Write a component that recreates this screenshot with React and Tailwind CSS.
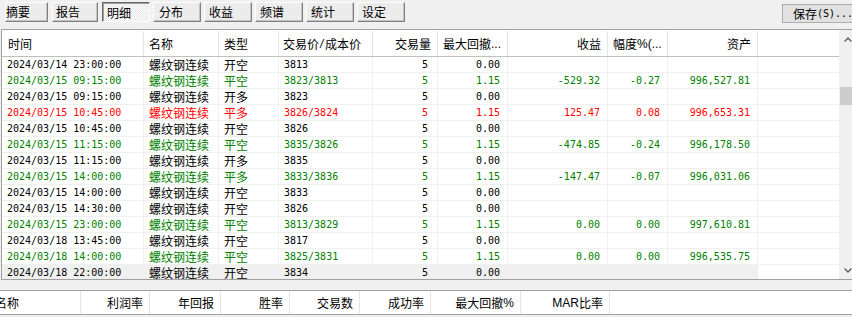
import React from "react";

const CJK = "font-['Noto_Sans_CJK_SC',sans-serif] text-[12px]";
const MONO = "font-['DejaVu_Sans_Mono',monospace] text-[10px]";
const SANS = "font-['Liberation_Sans',sans-serif] text-[12px]";

const buttons = [
  { t: "摘要", cls: "ml-[5px] w-[43px] pl-[0px]" },
  { t: "报告", cls: "ml-[4px] w-[46px] pl-[3px]" },
  { t: "明细", cls: "ml-[4px] w-[48px] pl-[4px]", pressed: true },
  { t: "分布", cls: "ml-[3px] w-[48px] pl-[5px]" },
  { t: "收益", cls: "ml-[3px] w-[48px] pl-[4px]" },
  { t: "频谱", cls: "ml-[3px] w-[48px] pl-[4px]" },
  { t: "统计", cls: "ml-[3px] w-[48px] pl-[4px]" },
  { t: "设定", cls: "ml-[3px] w-[48px] pl-[4px]" },
];

const G = "text-[#008000]";
const R = "text-[#ff0000]";
const K = "text-black";

const rows = [
  ["2024/03/14 23:00:00", "开空", "3813", "0.00", "", "", "", K],
  ["2024/03/15 09:15:00", "平空", "3823/3813", "1.15", "-529.32", "-0.27", "996,527.81", G],
  ["2024/03/15 09:15:00", "开多", "3823", "0.00", "", "", "", K],
  ["2024/03/15 10:45:00", "平多", "3826/3824", "1.15", "125.47", "0.08", "996,653.31", R],
  ["2024/03/15 10:45:00", "开空", "3826", "0.00", "", "", "", K],
  ["2024/03/15 11:15:00", "平空", "3835/3826", "1.15", "-474.85", "-0.24", "996,178.50", G],
  ["2024/03/15 11:15:00", "开多", "3835", "0.00", "", "", "", K],
  ["2024/03/15 14:00:00", "平多", "3833/3836", "1.15", "-147.47", "-0.07", "996,031.06", G],
  ["2024/03/15 14:00:00", "开空", "3833", "0.00", "", "", "", K],
  ["2024/03/15 14:30:00", "开空", "3826", "0.00", "", "", "", K],
  ["2024/03/15 23:00:00", "平空", "3813/3829", "1.15", "0.00", "0.00", "997,610.81", G],
  ["2024/03/18 13:45:00", "开空", "3817", "0.00", "", "", "", K],
  ["2024/03/18 14:00:00", "平空", "3825/3831", "1.15", "0.00", "0.00", "996,535.75", G],
  ["2024/03/18 22:00:00", "开空", "3834", "0.00", "", "", "", K, true],
];

const HC = "h-full flex items-center border-r border-[#e5e5e5] shrink-0 overflow-hidden whitespace-nowrap";
const DC = "h-full flex items-center border-r border-b border-[#f0f0f0] shrink-0 overflow-hidden whitespace-nowrap";

function Chevron({ up }) {
  return (
    <svg width="8" height="5" viewBox="0 0 8 5">
      <polyline
        points={up ? "0.6,4.4 4,1 7.4,4.4" : "0.6,0.6 4,4 7.4,0.6"}
        fill="none"
        stroke="#606060"
        strokeWidth="1.4"
      />
    </svg>
  );
}

export default function App() {
  return (
    <div className="w-[852px] h-[317px] overflow-hidden bg-[#f0f0f0] text-black relative">
      {/* toolbar */}
      <div className="h-[29px] flex items-start">
        {buttons.map((b) => (
          <div
            key={b.t}
            className={
              "mt-[2px] h-[20px] shrink-0 flex items-center " +
              CJK +
              " " +
              b.cls +
              (b.pressed
                ? " border border-t-[#696969] border-l-[#696969] border-r-white border-b-white shadow-[inset_1px_1px_0_#a0a0a0] bg-[repeating-conic-gradient(#ffffff_0_25%,#e6e6e6_0_50%)] bg-[length:2px_2px] pt-[1px]"
                : " border border-t-white border-l-white border-r-[#808080] border-b-[#808080] shadow-[inset_-1px_-1px_0_#c4c4c4] bg-[#ececec]")
            }
          >
            <span className="leading-[14px]">{b.t}</span>
          </div>
        ))}
        <div className="ml-auto mr-[-8px] mt-[4px] h-[19px] w-[78px] shrink-0 flex items-center pl-[10px] border border-[#adadad] bg-[#e1e1e1]">
          <span className={CJK + " leading-[14px]"}>保存</span>
          <span className={MONO + " leading-[14px]"}>(S)...</span>
        </div>
      </div>

      {/* main table frame */}
      <div className="ml-[1px] w-[860px] h-[251px] border-l border-t border-b border-[#a0a0a0] flex bg-white">
        <div className="w-[837px] shrink-0 flex flex-col pt-[1px]">
          {/* header */}
          <div className="h-[26px] flex border-b border-[#c0c0c0] bg-white">
            <div className={HC + " w-[142px] pl-[6px] " + CJK}><span className="leading-[14px]">时间</span></div>
            <div className={HC + " w-[75px] pl-[5px] " + CJK}><span className="leading-[14px]">名称</span></div>
            <div className={HC + " w-[60px] pl-[5px] " + CJK}><span className="leading-[14px]">类型</span></div>
            <div className={HC + " w-[94px] pl-[4px] " + CJK}>
              <span className="leading-[14px]">交易价</span>
              <span className={MONO + " leading-[14px]"}>/</span>
              <span className="leading-[14px]">成本价</span>
            </div>
            <div className={HC + " w-[65px] pr-[6px] justify-end " + CJK}><span className="leading-[14px]">交易量</span></div>
            <div className={HC + " w-[70px] pl-[5px] " + CJK}>
              <span className="leading-[14px]">最大回撤</span>
              <span className={SANS + " leading-[14px]"}>...</span>
            </div>
            <div className={HC + " w-[100px] pr-[6px] justify-end " + CJK}><span className="leading-[14px]">收益</span></div>
            <div className={HC + " w-[60px] pl-[5px] " + CJK}>
              <span className="leading-[14px]">幅度</span>
              <span className={SANS + " leading-[14px]"}>%(...</span>
            </div>
            <div className={HC + " w-[90px] pr-[6px] justify-end " + CJK}><span className="leading-[14px]">资产</span></div>
            <div className="h-full w-[81px] shrink-0"></div>
          </div>
          {/* body */}
          <div className="h-[222px] overflow-hidden flex flex-col">
            {rows.map((r, i) => {
              const c = r[7];
              const sel = r[8] ? " bg-[#f0f0f0]" : "";
              return (
                <div key={i} className={"h-[16px] shrink-0 flex " + c}>
                  <div className={DC + " w-[142px] pl-[5px] " + MONO + sel}><span className="leading-[14px]">{r[0]}</span></div>
                  <div className={DC + " w-[75px] pl-[5px] " + CJK + sel}><span className="leading-[14px]">螺纹钢连续</span></div>
                  <div className={DC + " w-[60px] pl-[5px] " + CJK + sel}><span className="leading-[14px]">{r[1]}</span></div>
                  <div className={DC + " w-[94px] pl-[5px] " + MONO + sel}><span className="leading-[14px]">{r[2]}</span></div>
                  <div className={DC + " w-[65px] pr-[9px] justify-end " + MONO + sel}><span className="leading-[14px]">5</span></div>
                  <div className={DC + " w-[70px] pr-[7px] justify-end " + MONO + sel}><span className="leading-[14px]">{r[3]}</span></div>
                  <div className={DC + " w-[100px] pr-[7px] justify-end " + MONO + sel}><span className="leading-[14px]">{r[4]}</span></div>
                  <div className={DC + " w-[60px] pr-[7px] justify-end " + MONO + sel}><span className="leading-[14px]">{r[5]}</span></div>
                  <div className={DC + " w-[90px] pr-[7px] justify-end " + MONO + sel}><span className="leading-[14px]">{r[6]}</span></div>
                  <div className="h-full w-[81px] shrink-0 border-b border-[#f0f0f0]"></div>
                </div>
              );
            })}
          </div>
        </div>
        {/* vertical scrollbar */}
        <div className="w-[17px] shrink-0 bg-[#f0f0f0] flex flex-col">
          <div className="h-[17px] mt-[1px] flex items-center justify-center">
            <Chevron up />
          </div>
          <div className="mt-[39px] ml-[1px] w-[15px] h-[18px] bg-[#cdcdcd]"></div>
          <div className="mt-auto h-[17px] flex items-center justify-center">
            <Chevron />
          </div>
        </div>
      </div>

      {/* splitter strip */}
      <div className="h-[10px]"></div>

      {/* bottom summary header */}
      <div className="h-[25px] border-t border-b border-[#a0a0a0] bg-white flex overflow-hidden">
        <div className="ml-[-10px] flex h-full">
          <div className={HC + " w-[91px] pl-[5px] border-[#c4c4c4] " + CJK}><span className="leading-[14px]">名称</span></div>
          <div className={HC + " w-[69px] pr-[6px] justify-end border-[#c4c4c4] " + CJK}><span className="leading-[14px]">利润率</span></div>
          <div className={HC + " w-[71px] pr-[6px] justify-end border-[#c4c4c4] " + CJK}><span className="leading-[14px]">年回报</span></div>
          <div className={HC + " w-[69px] pr-[6px] justify-end border-[#c4c4c4] " + CJK}><span className="leading-[14px]">胜率</span></div>
          <div className={HC + " w-[70px] pr-[6px] justify-end border-[#c4c4c4] " + CJK}><span className="leading-[14px]">交易数</span></div>
          <div className={HC + " w-[71px] pr-[6px] justify-end border-[#c4c4c4] " + CJK}><span className="leading-[14px]">成功率</span></div>
          <div className={HC + " w-[90px] pr-[6px] justify-end border-[#c4c4c4] " + CJK}>
            <span className="leading-[14px]">最大回撤</span>
            <span className={SANS + " leading-[14px]"}>%</span>
          </div>
          <div className={HC + " w-[89px] pr-[6px] justify-end border-[#c4c4c4] " + CJK}>
            <span className={SANS + " leading-[14px]"}>MAR</span>
            <span className="leading-[14px]">比率</span>
          </div>
        </div>
      </div>
    </div>
  );
}
